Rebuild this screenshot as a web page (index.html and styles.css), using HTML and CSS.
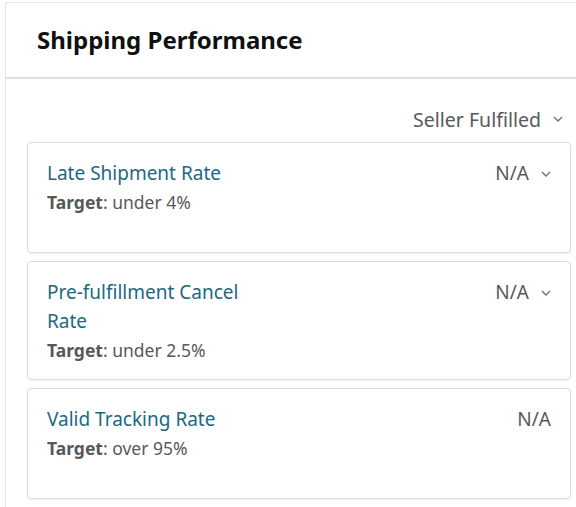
FILE: index.html
```html
<!DOCTYPE html>
<html>
<head>
<meta charset="utf-8">
<link rel="stylesheet" href="styles.css">
</head>
<body>
<div class="panel">
  <div class="panel-header">
    <h2 class="panel-title">Shipping Performance</h2>
  </div>
  <div class="panel-body">
    <div class="filter-row">
      <span class="filter">Seller Fulfilled
        <svg class="chev" width="10" height="6" viewBox="0 0 10 6"><path d="M1 1 L5 5 L9 1" fill="none" stroke="#6f7373" stroke-width="1.4"/></svg>
      </span>
    </div>
    <div class="card">
      <div class="card-main">
        <a class="metric">Late Shipment Rate</a>
        <div class="target"><b>Target</b>: under 4%</div>
      </div>
      <div class="value">N/A
        <svg class="chev" width="10" height="6" viewBox="0 0 10 6"><path d="M1 1 L5 5 L9 1" fill="none" stroke="#6f7373" stroke-width="1.4"/></svg>
      </div>
    </div>
    <div class="card">
      <div class="card-main">
        <a class="metric narrow">Pre-fulfillment Cancel Rate</a>
        <div class="target"><b>Target</b>: under 2.5%</div>
      </div>
      <div class="value">N/A
        <svg class="chev" width="10" height="6" viewBox="0 0 10 6"><path d="M1 1 L5 5 L9 1" fill="none" stroke="#6f7373" stroke-width="1.4"/></svg>
      </div>
    </div>
    <div class="card">
      <div class="card-main">
        <a class="metric">Valid Tracking Rate</a>
        <div class="target"><b>Target</b>: over 95%</div>
      </div>
      <div class="value no-chev">N/A</div>
    </div>
  </div>
</div>
</body>
</html>
```

FILE: styles.css
```css
html, body {
  margin: 0;
  padding: 0;
  background: #ffffff;
  overflow: hidden;
}
body {
  font-family: "Noto Sans", "Open Sans", sans-serif;
  color: #0f1111;
}
.panel {
  margin: 2px 0 0 5px;
  width: 588px;
  border: 1px solid #e3e6e6;
  box-sizing: border-box;
}
.panel-header {
  height: 76px;
  padding: 22px 31px 0;
  box-sizing: border-box;
  border-bottom: 2px solid #dfe1e1;
}
.panel-title {
  margin: 0;
  font-size: 24px;
  line-height: 30px;
  font-weight: 700;
  color: #0f1111;
}
.panel-body {
  padding: 25px 21px 10px;
}
.filter-row {
  display: flex;
  justify-content: flex-end;
  height: 30px;
  align-items: center;
  margin-bottom: 8px;
  padding-right: 8px;
}
.filter {
  font-size: 19.5px;
  color: #565959;
  display: flex;
  align-items: center;
  gap: 12px;
}
.chev {
  display: block;
}
.card {
  display: flex;
  justify-content: space-between;
  align-items: flex-start;
  border: 1px solid #dadddd;
  border-radius: 4px;
  box-shadow: 0 1px 2px rgba(0,0,0,0.06);
  padding: 16px 19px 14px 19px;
  min-height: 111px;
  box-sizing: border-box;
  margin-bottom: 8px;
}
.card-main {
  display: flex;
  flex-direction: column;
}
.metric {
  font-size: 19px;
  line-height: 29px;
  color: #1d6882;
  text-decoration: none;
}
.metric.narrow {
  max-width: 230px;
}
.target {
  font-size: 17.5px;
  line-height: 29px;
  color: #565959;
}
.target b {
  font-weight: 700;
}
.value {
  font-size: 19px;
  line-height: 29px;
  color: #565959;
  display: flex;
  align-items: center;
  gap: 12px;
}
```
